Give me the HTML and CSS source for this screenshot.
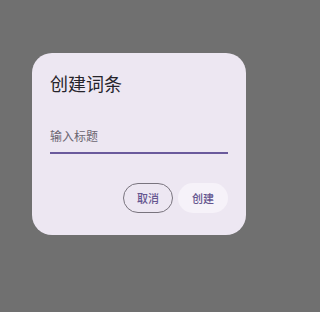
FILE: index.html
```html
<!DOCTYPE html>
<html lang="zh-CN">
<head>
<meta charset="utf-8">
<link rel="stylesheet" href="styles.css">
</head>
<body>
<div class="page">
  <div class="dialog">
    <h2 class="title">创建词条</h2>
    <div class="field">
      <div class="label">输入标题</div>
    </div>
    <div class="actions">
      <button class="btn btn-outline">取消</button>
      <button class="btn btn-tonal">创建</button>
    </div>
  </div>
</div>
</body>
</html>
```
FILE: styles.css
```css
html, body {
  margin: 0;
  padding: 0;
  background: #707070;
  font-family: "Noto Sans CJK SC", "Noto Sans", sans-serif;
}
.page {
  padding: 53px 0 0 32px;
  height: 312px;
  box-sizing: border-box;
}
.dialog {
  width: 214px;
  box-sizing: border-box;
  padding: 18px 18px 22px;
  background: #ede7f2;
  border-radius: 20px;
}
.title {
  margin: 0;
  font-size: 18px;
  line-height: 24px;
  font-weight: 400;
  color: #26242a;
}
.field {
  margin-top: 33px;
  padding-bottom: 8px;
  border-bottom: 2px solid #6a5a9c;
}
.label {
  font-size: 12px;
  line-height: 16px;
  color: #6b6570;
}
.actions {
  margin-top: 29px;
  display: flex;
  justify-content: flex-end;
  gap: 5px;
}
.btn {
  height: 30px;
  box-sizing: border-box;
  border-radius: 15px;
  font-family: inherit;
  font-size: 11px;
  font-weight: 500;
  line-height: 1;
  color: #65558f;
  cursor: pointer;
}
.btn-outline {
  padding: 0 13px;
  border: 1px solid #79747e;
  background: transparent;
}
.btn-tonal {
  padding: 0 14px;
  border: none;
  background: #f6f2f9;
}
```
